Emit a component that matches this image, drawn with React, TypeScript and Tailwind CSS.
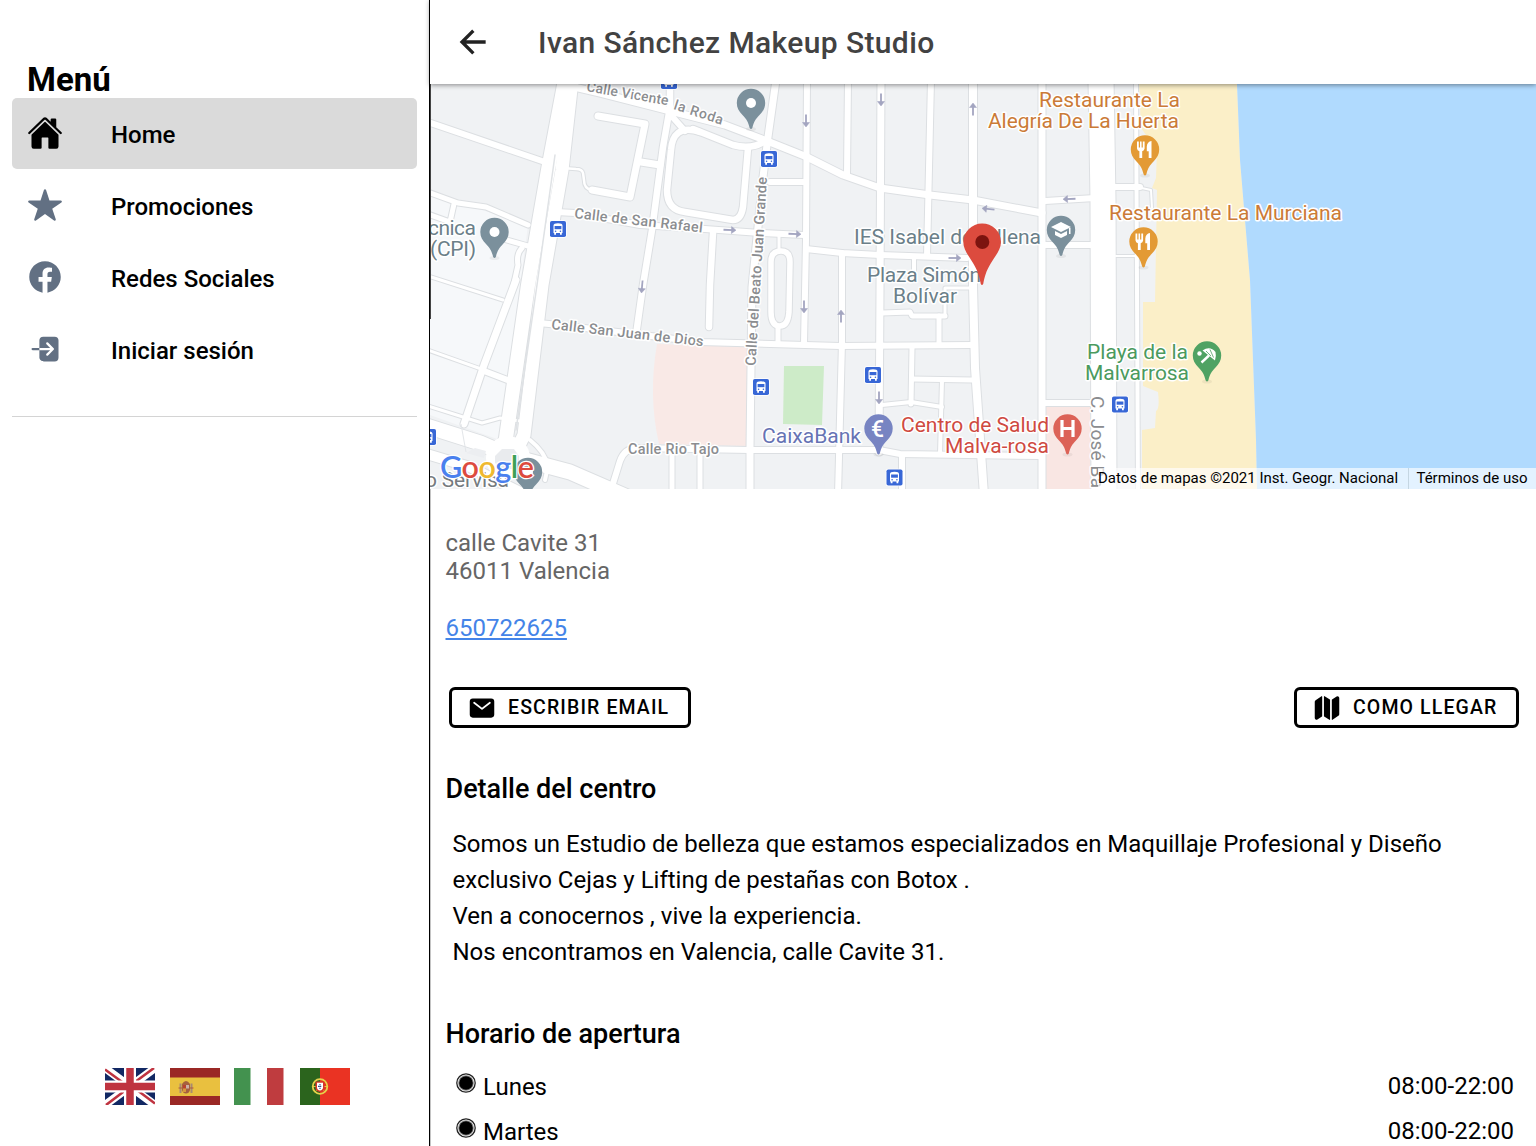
import type { ReactNode } from "react";
import {
  IoArrowBackSharp,
  IoHome,
  IoLogIn,
  IoLogoFacebook,
  IoMail,
  IoMap,
  IoStar,
} from "react-icons/io5";
import type { IconType } from "react-icons";

const menuItems: { label: string; icon: IconType; active?: boolean }[] = [
  { label: "Home", icon: IoHome, active: true },
  { label: "Promociones", icon: IoStar },
  { label: "Redes Sociales", icon: IoLogoFacebook },
  { label: "Iniciar sesión", icon: IoLogIn },
];

const hours = [
  { day: "Lunes", time: "08:00-22:00" },
  { day: "Martes", time: "08:00-22:00" },
];

/* Map data: [path, width] */
const roads: [string, number][] = [
  // left side
  ["M425 121L542 161", 6],
  ["M425 191L458 203L486 207L528 225", 5],
  ["M454 204L450 222L425 213", 5],
  ["M500 238L528 246", 5],
  ["M522 248Q516 254 518 265L512 292", 5],
  ["M425 275L503 300", 3],
  ["M425 349L484 370", 3],
  ["M484 371L510 381", 6],
  ["M425 405L482 423L500 418L520 421", 3],
  ["M516 280L484 365L464 424", 7],
  // Calle Vicente la Roda
  ["M570 86L600 93L725 125L767 141L807 157L843 175L880 188L930 195L973 200L1042 213", 7],
  ["M598 116L645 124L630 197L592 190", 7],
  ["M592 190Q584 189 584 180L583 173Q582 169 576 169L562 168", 2.5],
  ["M641 162L660 165", 7],
  ["M670 84L670 107L663 147L652 230L643 285L636 335", 6.5],
  ["M669 113L685 131", 6],
  ["M700 132C680 125 672 135 671 150L667 190Q667 210 685 212L733 220Q741 220 743 207L748 148", 6.5],
  ["M693 129L733 145Q752 150 765 141", 6.5],
  // Calle de San Rafael
  ["M556 212L575 213L640 225L705 229L760 233L804 235", 6],
  ["M806 249L842 253L880 255L967 258", 6],
  ["M713 233L710 285L709 327", 6.5],
  ["M779 235L779 252", 3],
  ["M771 262Q771 251 781 251Q790 251 790 262L789 312Q788 326 780 326Q771 326 771 312Z", 5.5],
  ["M778 328L778 344", 5],
  ["M770 182L806 182", 6],
  ["M776 80L768 137L763 177L752 287L750 448L750 495", 7],
  ["M807 80L806 240L804 344", 6],
  ["M848 80L847 175", 6],
  ["M881 80L880 290L879 452", 7],
  ["M931 80L927 256", 6],
  ["M973 80L973 285L975 368L984 495", 8],
  ["M1042 80L1042 495", 7],
  ["M842 253L842 342L838 495", 6],
  // Calle San Juan de Dios
  ["M538 323L560 325L700 342L805 345L840 346L973 345", 6],
  ["M914 258L914 272", 4],
  ["M882 313L910 312L912 316L945 316", 5],
  ["M970 288L945 288L945 316", 3],
  ["M939 316L939 344", 5],
  ["M912 348L911 404", 5],
  ["M912 379L972 380", 5],
  ["M942 380L940 454", 4],
  ["M882 405L911 402L942 407", 4],
  // Calle Rio Tajo
  ["M611 490L620 461Q624 449 636 448L750 450L879 450L900 454L1042 456", 6],
  ["M672 452L672 495", 5],
  ["M700 452L700 495", 5],
  ["M902 455L902 495", 6],
  ["M1045 201L1095 198", 6],
  ["M1045 245L1095 245", 6],
  ["M1045 403L1095 403", 6],
  ["M1110 187L1140 187", 6],
  ["M1137 187L1151 190L1152 208", 2],
  ["M1116 256L1138 256", 2],
  ["M1101 80L1103 200L1104 495", 25],
  ["M1136 80L1138 495", 4],
  // ring road and avenue
  ["M420 424L480 443L510 456L570 472L625 496", 15],
  ["M420 452L470 467L520 492", 10],
  ["M530 440Q545 452 548 466L545 480", 4],
  ["M565 80L548 170L528 285L506 438L500 460", 14],
  ["M572 80L562 170L542 285L524 435L512 460", 13],
];

const oneWay: [number, number, number][] = [
  // x, y, angle (0 points down)
  [806, 121, 0],
  [881, 100, 0],
  [973, 109, 180],
  [730, 230, -88],
  [795, 234, -88],
  [955, 258, -90],
  [642, 287, 5],
  [804, 307, 0],
  [841, 316, 180],
  [879, 398, 0],
  [988, 209, 96],
  [1069, 199, 88],
];

const busStops: [number, number][] = [
  [669, 81],
  [769, 159],
  [558, 229],
  [761, 387],
  [873, 375],
  [894.5, 477.5],
  [1120, 404.5],
  [428, 437],
];

type LabelProps = {
  x: number;
  y: number;
  width: number;
  color?: string;
  size?: number;
  rotate?: number;
  children: string;
};

function MapLabel({ x, y, width, color = "#6b7f89", size = 21, rotate = 0, children }: LabelProps) {
  return (
    <text
      x={x}
      y={y}
      textLength={width}
      fontSize={size}
      fill={color}
      stroke="#fff"
      strokeWidth={3}
      strokeLinejoin="round"
      paintOrder="stroke"
      transform={`rotate(${rotate} ${x} ${y})`}
    >
      {children}
    </text>
  );
}

function MapPin({ x, y, color, children }: { x: number; y: number; color: string; children?: ReactNode }) {
  return (
    <g transform={`translate(${x} ${y})`}>
      <ellipse cx="0" cy="26" rx="5" ry="2" fill="#000" opacity=".05" />
      <path
        d="M0-14.2A14.2 14.2 0 0 0-14.2 0C-14.2 5-12 8.500-8.500 12C-4.500 16-2.800 19-1.300 25Q0 27 1.300 25C2.800 19 4.500 16 8.500 12C12 8.500 14.200 5 14.200 0A14.200 14.200 0 0 0 0-14.200Z"
        fill={color}
      />
      {children}
    </g>
  );
}

function Fork() {
  return (
    <g fill="#fff">
      <path d="M-8-8h1.800v6h1.200v-6h1.600v6h1.200v-6H-.4v7Q-.6 1-2.800 1.800V8.500h-2.800V1.800Q-7.800 1-8 -1Z" />
      <path d="M6.500-8.500V8.500H3.700V1.800H1.800V-3Q2.200-8 6.500-8.500Z" />
    </g>
  );
}

function BusStop({ x, y }: { x: number; y: number }) {
  return (
    <g transform={`translate(${x - 8} ${y - 8})`}>
      <rect x="-.8" y="-.8" width="17.600" height="17.600" rx="2.500" fill="#fff" />
      <rect width="16" height="16" rx="1.800" fill="#3867d6" />
      <path d="M3.500 4.500Q3.500 2.300 8 2.300T12.500 4.500V12H11.800V13.700H10V12H6V13.700H4.200V12H3.500Z" fill="#fff" />
      <rect x="4.600" y="5" width="6.800" height="3.200" fill="#3867d6" />
      <circle cx="5.600" cy="10.200" r=".8" fill="#3867d6" />
      <circle cx="10.400" cy="10.200" r=".8" fill="#3867d6" />
    </g>
  );
}

function StudioMap() {
  return (
    <svg
      viewBox="430 84 1106 405"
      className="block h-[405px] w-full font-['Roboto',sans-serif]"
    >
      <rect x="430" y="84" width="1106" height="405" fill="#f0f2f4" />
      {/* campus */}
      <path d="M430 193L528 225L500 440L430 415Z" fill="#f6f8fa" />
      {/* parks and blocks */}
      <path d="M657 344L747 347V446L659 444Q648 396 657 344Z" fill="#f9e9e6" />
      <path d="M1046 407H1090V489H1046Z" fill="#f9e6e3" />
      <path d="M784 366L824 366L822 425L783 424Z" fill="#cdebc8" />

      <g fill="none" strokeLinecap="round" strokeLinejoin="round">
        {roads.map(([d, w], i) => (
          <path key={i} d={d} stroke="#dcdfe2" strokeWidth={w + 2} />
        ))}
        {roads.map(([d, w], i) => (
          <path key={i} d={d} stroke="#fff" strokeWidth={w} />
        ))}
        <path d="M555 155L537 285L516 430" stroke="#dfe2e5" strokeWidth="1.500" />
      </g>
      <circle cx="508" cy="458" r="22" fill="#fff" />
      <path d="M502 449H514L519 456V463L514 469H502L495 463V456Z" fill="#e9ebee" />
      <path d="M461 424L466 452" stroke="#e3e6e9" strokeWidth="1" />
      <path d="M475 448L486 451L484 458L466 453Z" fill="#eceef1" />

      {/* coast */}
      <path
        d="M1139 84H1237L1240 160L1250 280L1256 440L1257 489H1142V430L1155 428L1156 411Q1160 409 1158 392L1143 386V302H1155L1157 190L1152 188L1156 178L1157 150L1141 128Z"
        fill="#fbefc8"
      />
      <path d="M1237 84L1240 160L1250 280L1256 440L1257 489H1536V84Z" fill="#b0dafe" />

      <g stroke="#a3a5c0" strokeWidth="1.800" fill="#a3a5c0">
        {oneWay.map(([x, y, a]) => (
          <g key={`${x}-${y}`} transform={`translate(${x} ${y}) rotate(${a})`}>
            <path d="M0-6.500V3" />
            <path d="M-3.500 1.500H3.500L0 6Z" strokeWidth=".5" />
          </g>
        ))}
      </g>

      {/* street names */}
      <g fontWeight="500">
        <MapLabel x={586} y={91} width={83} color="#8b8d90" size={14} rotate={10}>Calle Vicente</MapLabel>
        <MapLabel x={673} y={109} width={51} color="#8b8d90" size={14} rotate={18}>la Roda</MapLabel>
        <MapLabel x={574} y={218} width={129} color="#8b8d90" size={14.5} rotate={6.500}>Calle de San Rafael</MapLabel>
        <MapLabel x={551} y={329} width={153} color="#8b8d90" size={14.5} rotate={6.500}>Calle San Juan de Dios</MapLabel>
        <MapLabel x={628} y={453.5} width={91} color="#8b8d90" size={14.5}>Calle Rio Tajo</MapLabel>
        <MapLabel x={755.5} y={366} width={189} color="#8b8d90" size={14.5} rotate={-86.500}>Calle del Beato Juan Grande</MapLabel>
      </g>
      <MapLabel x={1091} y={396} width={92} color="#8b8d90" size={19} rotate={90}>C. José Ba</MapLabel>

      {busStops.map(([x, y]) => (
        <BusStop key={`${x}-${y}`} x={x} y={y} />
      ))}

      {/* places */}
      <MapPin x={494.5} y={232} color="#7b909c">
        <circle r="5" fill="#fff" />
      </MapPin>
      <MapPin x={751} y={103} color="#7b909c">
        <circle r="5" fill="#fff" />
      </MapPin>
      <MapPin x={528} y={472} color="#7b909c">
        <circle r="5" fill="#fff" />
      </MapPin>
      <MapPin x={1061} y={230} color="#7b909c">
        <path d="M0-8L10-3L0 2L-10-3ZM-6 1V5L0 8L6 5V1L0 4ZM8-2H9.500V4H8Z" fill="#fff" />
      </MapPin>
      <MapPin x={1145} y={149.5} color="#e39a35">
        <Fork />
      </MapPin>
      <MapPin x={1143.500} y={241.500} color="#e39a35">
        <Fork />
      </MapPin>
      <MapPin x={1207} y={355.500} color="#4fa263">
        <circle cx="-7.500" cy="-2" r="2.200" fill="#fff" />
        <path d="M-4.500-5Q3-10 8.500-3.500Q9.500 1 8 5Z" fill="#fff" />
        <path d="M2 0L-5.500 7" stroke="#fff" strokeWidth="2.400" />
        <path d="M-1-4.500L4 .5M3-6L6.500 2" stroke="#4fa263" strokeWidth=".8" />
      </MapPin>
      <MapPin x={878.5} y={428.500} color="#7784c2">
        <text x="-1" y="8" fontSize="23" fontWeight="500" fill="#fff" textAnchor="middle">€</text>
      </MapPin>
      <MapPin x={1067.500} y={428.500} color="#dc6257">
        <path d="M-5.500-8.500V8.500M5.500-8.500V8.500M-5.500 0H5.500" stroke="#fff" strokeWidth="3.200" />
      </MapPin>

      <MapLabel x={428} y={235} width={48}>cnica</MapLabel>
      <MapLabel x={430} y={256} width={46}>(CPI)</MapLabel>
      <MapLabel x={854} y={244} width={187}>IES Isabel de Villena</MapLabel>
      <MapLabel x={867} y={282} width={114}>Plaza Simón</MapLabel>
      <MapLabel x={893} y={303} width={64}>Bolívar</MapLabel>
      <MapLabel x={1039} y={106.5} width={141} color="#cb7b37">Restaurante La</MapLabel>
      <MapLabel x={988} y={127.5} width={191} color="#cb7b37">Alegría De La Huerta</MapLabel>
      <MapLabel x={1109} y={219.5} width={233} color="#cb7b37">Restaurante La Murciana</MapLabel>
      <MapLabel x={1087} y={359} width={101} color="#4b9a5e">Playa de la</MapLabel>
      <MapLabel x={1085} y={380} width={104} color="#4b9a5e">Malvarrosa</MapLabel>
      <MapLabel x={762} y={442.5} width={99} color="#6673b4">CaixaBank</MapLabel>
      <MapLabel x={901} y={432} width={148} color="#cf4a41">Centro de Salud</MapLabel>
      <MapLabel x={945} y={453} width={104} color="#cf4a41">Malva-rosa</MapLabel>
      <MapLabel x={425} y={487} width={84} color="#757b80">o Servisa</MapLabel>

      {/* studio marker */}
      <path
        d="M982 223.500A18.700 18.700 0 0 0 963.300 242C963.300 250 969 256 973 263C978 271 979.500 277 980.800 284Q982 286 983.200 284C984.500 277 986 271 991 263C995 256 1001 250 1001 242A18.700 18.700 0 0 0 982 223.500Z"
        fill="#dc4b3e"
      />
      <circle cx="982.300" cy="242" r="7" fill="#7c140f" />

      {/* Google wordmark */}
      <text
        x="440"
        y="477.500"
        textLength="94"
        fontSize="30.500"
        fontWeight="600"
        fontFamily="Lato, sans-serif"
        stroke="#fff"
        strokeWidth="2.500"
        paintOrder="stroke"
      >
        <tspan fill="#4a80ee">G</tspan>
        <tspan fill="#dd4b3e">o</tspan>
        <tspan fill="#efb92f">o</tspan>
        <tspan fill="#4a80ee">g</tspan>
        <tspan fill="#3fa055">l</tspan>
        <tspan fill="#dd4b3e">e</tspan>
      </text>
    </svg>
  );
}

function ActionButton({ icon: Icon, className, children }: { icon: IconType; className: string; children: string }) {
  return (
    <button
      className={`flex h-[41px] items-center rounded-[6px] border-[3px] border-black pl-[16.5px] text-[19.5px] font-medium tracking-[1.12px] ${className}`}
    >
      <Icon className="mr-3 size-[28px] shrink-0" />
      <span className="pt-px whitespace-nowrap">{children}</span>
    </button>
  );
}

function Flags() {
  return (
    <div className="flex gap-[14.5px] pl-[105px]">
      {/* English */}
      <svg viewBox="0 0 50 37.500" className="h-[37px] w-[50px]" preserveAspectRatio="none">
        <rect width="50" height="37.500" fill="#122863" />
        <path d="M0 0L50 37.500M50 0L0 37.500" stroke="#fff" strokeWidth="8" />
        <path d="M0 1.500L25 20M25 17L50 36M49 0L25 18M25 19L1 37.500" stroke="#bf3340" strokeWidth="2.600" />
        <path d="M25 0V37.500M0 18.750H50" stroke="#fff" strokeWidth="12" />
        <path d="M25 0V37.500M0 18.750H50" stroke="#bf3340" strokeWidth="7.500" />
      </svg>
      {/* Spanish */}
      <svg viewBox="0 0 50 37" className="h-[37px] w-[50px]">
        <rect width="50" height="37" fill="#9a2825" />
        <rect y="9.500" width="50" height="18.500" fill="#e9c03f" />
        <path d="M9.500 15.500H11.500V25H9.500ZM20.500 15.500H22.500V25H20.500Z" fill="#a98a72" />
        <path d="M12 16Q16 10 20 16L20 22Q19 25.500 16 25.500T12 22Z" fill="#a5603f" />
        <path d="M13 17H16V20.500H13Z" fill="#b9412f" />
        <path d="M16 17H19V20.500H16Z" fill="#cbb0a8" />
        <path d="M13 20.500H16V24H13Z" fill="#d79a3c" />
        <path d="M8.500 20H12M20 20H23.500" stroke="#b0583f" strokeWidth="1.200" />
      </svg>
      {/* Italian */}
      <svg viewBox="0 0 50 37" className="h-[37px] w-[50px]">
        <rect width="50" height="37" fill="#fff" />
        <rect width="16.500" height="37" fill="#43924f" />
        <rect x="33" width="16.500" height="37" fill="#bf3c3f" />
      </svg>
      {/* Portuguese */}
      <svg viewBox="0 0 50 37" className="ml-[1.5px] h-[37px] w-[50px]">
        <rect width="50" height="37" fill="#ea3323" />
        <rect width="20" height="37" fill="#2b641d" />
        <circle cx="20" cy="18.500" r="7.300" fill="none" stroke="#e5d14a" strokeWidth="1.800" />
        <path d="M13 18.500H27M15 13L25 24M25 13L15 24" stroke="#e5d14a" strokeWidth=".9" />
        <path d="M15.500 13.500H24.500V19.500Q24.500 23.500 20 24Q15.500 23.500 15.500 19.500Z" fill="#d63427" />
        <path d="M17 14.700H23V19.500Q22.800 22.200 20 22.500Q17.200 22.200 17 19.500Z" fill="#fff" />
        <path d="M20 16V21M18 18.300H22" stroke="#3a4f8c" strokeWidth="1.200" strokeDasharray="1.300 .7" />
      </svg>
    </div>
  );
}

function Sidebar() {
  return (
    <aside className="flex h-full w-[430px] shrink-0 flex-col border-r border-black bg-white pt-[60px]">
      <h1 className="h-[38px] pt-px pl-[27px] text-[33px] leading-[38px] font-bold">Menú</h1>
      <nav className="mr-3 ml-3 flex h-[319px] flex-col gap-px border-b border-[#d4d4d4]">
        {menuItems.map(({ label, icon: Icon, active }) => (
          <a
            key={label}
            className={`flex h-[71px] items-center rounded-[5px] pl-[15px] ${active ? "bg-[#dadada]" : ""}`}
          >
            <Icon className={`mb-px size-9 ${active ? "text-black" : "text-[#627083]"}`} />
            <span className="pt-[3px] pl-12 text-[24px] leading-7 font-medium">{label}</span>
          </a>
        ))}
      </nav>
      <div className="mt-auto mb-[41px]">
        <Flags />
      </div>
    </aside>
  );
}

export default function App() {
  return (
    <div className="flex h-[1146px] w-[1536px] overflow-hidden bg-white font-['Roboto',sans-serif] text-black">
      <Sidebar />
      <main className="flex min-w-0 flex-1 flex-col">
        <header className="z-10 flex h-[84px] shrink-0 items-center bg-white pl-[25px] shadow-[0_1px_5px_rgba(0,0,0,0.45)]">
          <IoArrowBackSharp className="size-9 text-[#222]" />
          <h2 className="pl-[47px] text-[30px] font-medium tracking-[0.38px] text-[#424242]">
            Ivan Sánchez Makeup Studio
          </h2>
        </header>

        <div className="relative shrink-0">
          <StudioMap />
          <div className="absolute top-0 left-0 h-[235px] w-px bg-[#444]" />
          {/* attribution */}
          <div className="absolute right-0 bottom-0 flex h-[21px] bg-white/65 text-[15px] leading-[21px]">
            <span className="w-[310px] whitespace-nowrap">Datos de mapas ©2021 Inst. Geogr. Nacional</span>
            <span className="border-l border-[#c5d6e2] pr-[8.5px] pl-[7.5px] whitespace-nowrap">Términos de uso</span>
          </div>
        </div>

        <div className="flex-1 border-l border-[#c4c4c4] pr-[17.5px] pl-[14.5px]">
          <address className="pt-10 text-[24px] leading-[28px] text-[#666] not-italic">
            calle Cavite 31
            <br />
            46011 Valencia
          </address>
          <a className="mt-[29px] block text-[24px] leading-[28px] text-[#4484e8] underline">650722625</a>

          <div className="mt-[45px] flex justify-between pl-[3px]">
            <ActionButton icon={IoMail} className="w-[242px]">ESCRIBIR EMAIL</ActionButton>
            <ActionButton icon={IoMap} className="w-[225px]">COMO LLEGAR</ActionButton>
          </div>

          <h3 className="mt-[45px] text-[27px] leading-8 font-medium">Detalle del centro</h3>
          <p className="mt-[21px] pl-[7px] text-[24px] leading-9 whitespace-nowrap">
            Somos un Estudio de belleza que estamos especializados en Maquillaje Profesional y Diseño
            <br />
            exclusivo Cejas y Lifting de pestañas con Botox .
            <br />
            Ven a conocernos , vive la experiencia.
            <br />
            Nos encontramos en Valencia, calle Cavite 31.
          </p>

          <h3 className="mt-[48px] text-[27px] leading-8 font-medium">Horario de apertura</h3>
          <ul className="mt-[14px]">
            {hours.map(({ day, time }) => (
              <li key={day} className="flex h-[45px] items-start pr-[4.5px] pl-[10px] text-[24px] leading-[45px]">
                <svg viewBox="0 0 20 20" className="mt-[9px] mr-[7.5px] size-5">
                  <circle cx="10" cy="10" r="9.200" fill="#fff" stroke="#222" strokeWidth="1.300" />
                  <circle cx="10" cy="10" r="7.800" fill="#888" />
                  <circle cx="10" cy="10" r="6.800" fill="#000" />
                </svg>
                <span className="pt-px">{day}</span>
                <span className="ml-auto">{time}</span>
              </li>
            ))}
          </ul>
        </div>
      </main>
    </div>
  );
}
